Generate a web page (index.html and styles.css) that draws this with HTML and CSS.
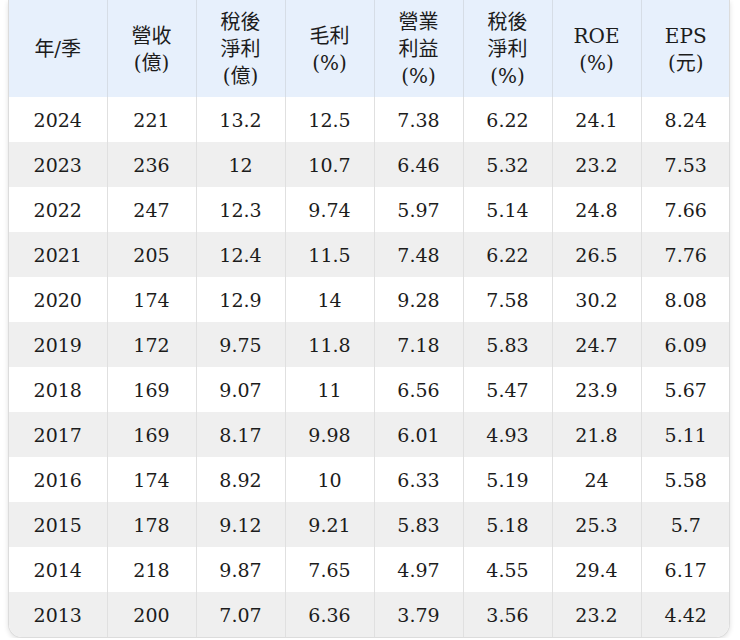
FILE: index.html
```html
<!DOCTYPE html>
<html lang="zh-Hant">
<head>
<meta charset="utf-8">
<title>財務</title>
<link rel="stylesheet" href="styles.css">
</head>
<body>
<div class="card">
<table class="fin">
<colgroup>
<col class="c-first"><col class="c"><col class="c"><col class="c"><col class="c"><col class="c"><col class="c"><col class="c">
</colgroup>
<thead>
<tr>
<th>年/季</th>
<th>營收<br>(億)</th>
<th>稅後<br>淨利<br>(億)</th>
<th>毛利<br>(%)</th>
<th>營業<br>利益<br>(%)</th>
<th>稅後<br>淨利<br>(%)</th>
<th>ROE<br>(%)</th>
<th>EPS<br>(元)</th>
</tr>
</thead>
<tbody>
<tr><td>2024</td><td>221</td><td>13.2</td><td>12.5</td><td>7.38</td><td>6.22</td><td>24.1</td><td>8.24</td></tr>
<tr><td>2023</td><td>236</td><td>12</td><td>10.7</td><td>6.46</td><td>5.32</td><td>23.2</td><td>7.53</td></tr>
<tr><td>2022</td><td>247</td><td>12.3</td><td>9.74</td><td>5.97</td><td>5.14</td><td>24.8</td><td>7.66</td></tr>
<tr><td>2021</td><td>205</td><td>12.4</td><td>11.5</td><td>7.48</td><td>6.22</td><td>26.5</td><td>7.76</td></tr>
<tr><td>2020</td><td>174</td><td>12.9</td><td>14</td><td>9.28</td><td>7.58</td><td>30.2</td><td>8.08</td></tr>
<tr><td>2019</td><td>172</td><td>9.75</td><td>11.8</td><td>7.18</td><td>5.83</td><td>24.7</td><td>6.09</td></tr>
<tr><td>2018</td><td>169</td><td>9.07</td><td>11</td><td>6.56</td><td>5.47</td><td>23.9</td><td>5.67</td></tr>
<tr><td>2017</td><td>169</td><td>8.17</td><td>9.98</td><td>6.01</td><td>4.93</td><td>21.8</td><td>5.11</td></tr>
<tr><td>2016</td><td>174</td><td>8.92</td><td>10</td><td>6.33</td><td>5.19</td><td>24</td><td>5.58</td></tr>
<tr><td>2015</td><td>178</td><td>9.12</td><td>9.21</td><td>5.83</td><td>5.18</td><td>25.3</td><td>5.7</td></tr>
<tr><td>2014</td><td>218</td><td>9.87</td><td>7.65</td><td>4.97</td><td>4.55</td><td>29.4</td><td>6.17</td></tr>
<tr><td>2013</td><td>200</td><td>7.07</td><td>6.36</td><td>3.79</td><td>3.56</td><td>23.2</td><td>4.42</td></tr>
</tbody>
</table>
</div>
</body>
</html>
```
FILE: styles.css
```css
html, body {
  margin: 0;
  padding: 0;
  background: #ffffff;
}
body {
  padding-left: 8px;
}
.card {
  width: 722px;
  box-sizing: border-box;
  border: 1px solid #dcdcdc;
  border-top: none;
  border-radius: 0 0 14px 14px;
  overflow: hidden;
  box-shadow: 0 2px 5px rgba(0, 0, 0, 0.12);
  background: #fff;
}
.fin {
  width: 100%;
  border-collapse: collapse;
  table-layout: fixed;
  font-family: "DejaVu Serif", "Noto Sans CJK TC", serif;
  color: #1c1c1c;
}
.c-first { width: 98px; }
.c { width: 89px; }
.fin th {
  background: #e7f0fc;
  font-weight: normal;
  font-size: 20px;
  line-height: 27px;
  padding: 9px 0 7px;
  height: 81px;
  text-align: center;
  vertical-align: middle;
  border-left: 1px solid #d6dde6;
}
.fin td {
  height: 45px;
  padding: 0;
  font-size: 19px;
  text-align: center;
  vertical-align: middle;
  border-left: 1px solid #e0e0e0;
}
.fin th:first-child, .fin td:first-child {
  border-left: none;
}
.fin tbody tr:nth-child(even) td {
  background: #efefef;
}
```
